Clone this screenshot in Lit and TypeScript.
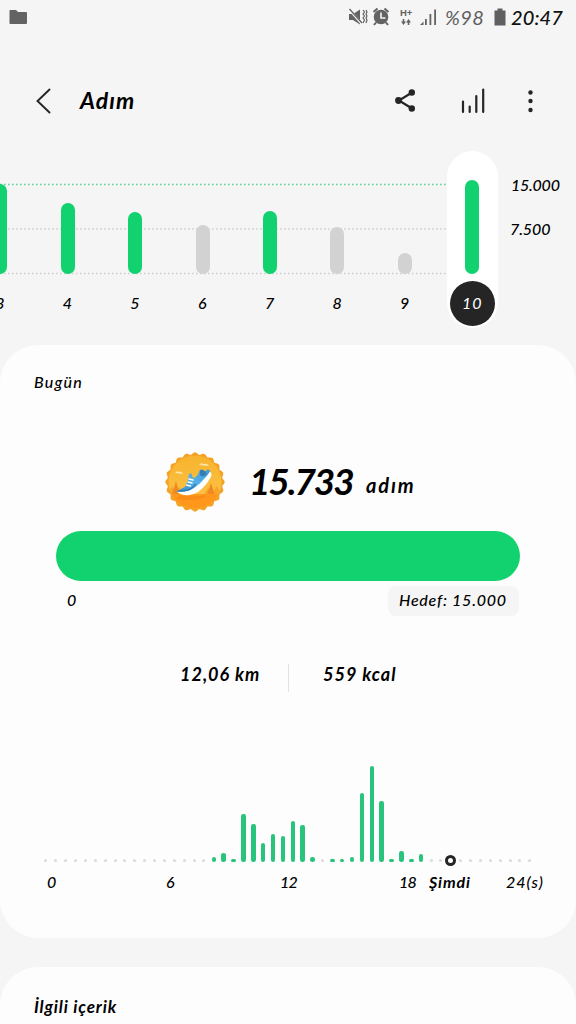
import { LitElement, html, svg, css } from "lit";
import { customElement } from "lit/decorators.js";

interface Day { label: string; height: number; met: boolean; selected?: boolean }

const DAYS: Day[] = [
  { label: "3", height: 90, met: true },
  { label: "4", height: 71, met: true },
  { label: "5", height: 62, met: true },
  { label: "6", height: 49, met: false },
  { label: "7", height: 63, met: true },
  { label: "8", height: 47, met: false },
  { label: "9", height: 21, met: false },
  { label: "10", height: 94, met: true, selected: true },
];

// Half-hour buckets; 0 draws a faint dot, -1 marks the current time.
const SLOTS: number[] = [
  0, 0, 0, 0, 0, 0, 0, 0, 0, 0, 0, 0, 0, 0, 0, 0, 0,
  5, 9, 3, 48, 38, 19, 28, 26, 41, 37, 5, 0, 3, 3, 5, 69, 96, 61, 3, 11, 3, 8, 0, 0,
  -1, 0, 0, 0, 0, 0, 0, 0, 0,
];

@customElement("week-chart")
class WeekChart extends LitElement {
  static styles = css`
    :host { display: grid; grid-template-columns: 507px 69px; height: 177px; overflow: hidden; }
    .plot, .axis { grid-row: 1; }
    .grid { grid-area: 1 / 1; width: 447px; height: 177px; display: block; }
    .plot { grid-column: 1; display: flex; margin-left: -33.5px; z-index: 1; }
    .col { width: 67.45px; flex: none; display: flex; justify-content: center; }
    .track { width: 51px; height: 177px; box-sizing: border-box; display: flex; flex-direction: column; align-items: center; justify-content: flex-end; border-radius: 26px; padding-bottom: 2.5px; }
    .track.on { background: #fff; }
    .bar { width: 14px; border-radius: 7px; background: #d2d2d2; }
    .bar.met { background: #12d16f; }
    .day { margin-top: 7px; width: 45px; height: 45px; border-radius: 50%; display: flex; align-items: center; justify-content: center; font-size: 16px; letter-spacing: .5px; color: #000; box-sizing: border-box; padding-bottom: 1px; }
    .on .day { background: #252525; color: #fff; letter-spacing: 1px; font-weight: 400; }
    .axis { grid-column: 2; padding: 24px 0 0 4px; font-size: 16px; line-height: 20px; display: flex; flex-direction: column; gap: 24px; color: #000; }
    .top { letter-spacing: -.25px; }
    .mid { letter-spacing: -.1px; margin-left: -1px; }
  `;
  render() {
    return html`
      <svg class="grid" viewBox="0 0 447 177">
        <path d="M0 33.5H447" stroke="#62cf9d" stroke-width="1.5" stroke-dasharray="1.6 2.4" />
        <path d="M0 78H447M0 122.5H447" stroke="#cfcfcf" stroke-width="1.3" stroke-dasharray="1.6 2.4" />
      </svg>
      <div class="plot">
        ${DAYS.map((d) => html`
          <div class="col">
            <div class="track ${d.selected ? "on" : ""}">
              <div class="bar ${d.met ? "met" : ""}" style="height:${d.height}px"></div>
              <div class="day">${d.label}</div>
            </div>
          </div>`)}
      </div>
      <div class="axis"><span class="top">15.000</span><span class="mid">7.500</span></div>
    `;
  }
}

@customElement("hour-chart")
class HourChart extends LitElement {
  static styles = css`
    :host { display: block; padding: 0 22px 0 41px; }
    .slots { display: flex; height: 104px; align-items: flex-end; }
    .slot { width: 9.88px; flex: none; display: flex; justify-content: center; align-items: flex-end; }
    .bar { width: 4.4px; border-radius: 2.2px; background: #29c47b; }
    .dot { width: 3px; height: 3px; border-radius: 50%; background: #dadada; }
    .now { flex: none; box-sizing: border-box; width: 11px; height: 11px; border: 3px solid #252525; border-radius: 50%; background: #fff; margin-bottom: -4px; }
    .ticks { display: grid; grid-template-columns: 119px 114px 119px 30px 77px 1fr; margin-top: 8px; padding-left: 6px; font-size: 16px; line-height: 24px; white-space: nowrap; color: #000; }
    .now-label { font-weight: 700; letter-spacing: .9px; }
    .end { letter-spacing: 1px; }
    .tight { letter-spacing: -.8px; }
  `;
  render() {
    return html`
      <div class="slots">
        ${SLOTS.map((v) => html`<div class="slot">${
          v < 0 ? html`<div class="now"></div>`
          : v === 0 ? html`<div class="dot"></div>`
          : html`<div class="bar" style="height:${v}px"></div>`}</div>`)}
      </div>
      <div class="ticks"><span>0</span><span>6</span><span class="tight">12</span><span class="tight">18</span><span class="now-label">Şimdi</span><span class="end">24(s)</span></div>
    `;
  }
}

const scallop = (): string => {
  const pts: string[] = [];
  const teeth = 20;
  for (let i = 0; i < teeth; i++) {
    const a = (i / teeth) * Math.PI * 2 - Math.PI / 2;
    const step = (Math.PI * 2) / teeth;
    const at = (r: number, t: number) => `${(30 + r * Math.cos(t)).toFixed(2)} ${(30 + r * Math.sin(t)).toFixed(2)}`;
    pts.push(`${i ? "L" : "M"}${at(27.4, a - step / 2)}L${at(29.3, a - step * 0.14)}Q${at(30, a)} ${at(29.3, a + step * 0.14)}`);
  }
  return pts.join("") + "Z";
};

const badge = svg`
  <defs>
    <clipPath id="disc"><circle cx="30" cy="30" r="26.5" /></clipPath>
    <linearGradient id="sky" x1="0" y1="0" x2="0" y2="1"><stop offset="0" stop-color="#f7b22b" /><stop offset="1" stop-color="#fcc64c" /></linearGradient>
    <linearGradient id="shoe" x1="1" y1="0" x2="0" y2="1"><stop offset="0" stop-color="#4296cf" /><stop offset=".5" stop-color="#55b2e8" /><stop offset="1" stop-color="#2d84c4" /></linearGradient>
  </defs>
  <path d=${scallop()} fill="#f5a124" />
  <g clip-path="url(#disc)">
    <rect width="60" height="60" fill="url(#sky)" />
    <path d="M3 43L7 34L10 39L14 35L20 43ZM39 43L43 36L48 40L52 34L57 43Z" fill="#f7a52a" />
    <path d="M7 43L11 29L15 43ZM42 43L46 31L50 43Z" fill="#f08a20" />
    <path d="M0 42H60V60H0Z" fill="#ff971c" />
    <path d="M15 44H42Q34 50 10 47Z" fill="#f68314" opacity=".6" />
  </g>
  <path d="M10 21q2-3 4-1q3-1 4 2zM34 13q2-3 5-1q3-1 5 2z" fill="#fee6a6" />
  <path d="M12 40Q15 37 20 35L23.500 27Q23 22 26 21L28 26Q33 25 34.500 18.500Q37 16 40 19.500Q43 16 45 19L46 22Q43 30 38 34Q32 42 24 42Z" fill="url(#shoe)" />
  <path d="M35 18.500Q37.500 16.500 40 19.500L42 22Q38 26 35 23Z" fill="#347eb4" />
  <path d="M12 39Q22 41 29 36Q35 32 39 27Q43 23 45 19.500Q48 22 45 26.500Q40 35 33 40Q27 44 20 43Q13 42 12 39Z" fill="#fff" />
  <path d="M12 39Q22 40 28 35L31 32" fill="none" stroke="#2878b4" stroke-width="1.200" />
  <path d="M24 27l4 1M23 30l4 1M21.500 33l4 1" stroke="#fff" stroke-width="1.300" stroke-linecap="round" />
`;

@customElement("app-root")
class AppRoot extends LitElement {
  static styles = css`
    :host { display: block; width: 576px; height: 1024px; overflow: hidden; background: #f5f5f5; color: #000; font-family: Lato, "Open Sans", sans-serif; font-style: italic; font-weight: 500; }
    svg { display: block; flex: none; }
    .status { height: 34px; box-sizing: border-box; display: flex; align-items: center; padding: 0 12px 0 9px; }
    .sys { margin-left: auto; }
    .pct { width: 42px; margin-left: 6px; font-size: 20px; letter-spacing: .4px; color: #606060; white-space: nowrap; font-weight: 400; }
    .cell { margin-left: 7px; }
    .clock { width: 53px; margin-left: 5px; font-size: 20px; letter-spacing: .1px; color: #111; white-space: nowrap; }
    .bar { height: 117px; box-sizing: border-box; display: flex; align-items: center; padding: 16px 32px 0 35px; }
    h1 { margin: 0 auto 2px 27px; font-size: 23px; line-height: 28px; font-weight: 700; letter-spacing: 1.1px; }
    .card { margin-top: 17px; height: 593px; box-sizing: border-box; background: #fdfdfd; border-radius: 38px; padding-top: 26px; }
    .today { padding-left: 34px; font-size: 16px; line-height: 22px; letter-spacing: 1.2px; }
    .hero { display: flex; align-items: center; height: 62px; margin-top: 58px; padding-left: 165px; }
    .count { margin-left: 24px; width: 117px; font-size: 37px; line-height: 44px; font-weight: 700; letter-spacing: -2.1px; margin-bottom: 3px; }
    .unit { font-size: 20px; font-weight: 700; padding-top: 6px; letter-spacing: 1.9px; }
    .goal { height: 50px; margin: 18px 56px 0; border-radius: 25px; background: #12d16f; }
    .range { display: flex; justify-content: space-between; align-items: center; height: 30px; margin: 5px 57px 0 67px; font-size: 16px; }
    .zero { padding-bottom: 3px; }
    .target { box-sizing: border-box; width: 131px; height: 30px; padding: 0 0 2px 11px; line-height: 28px; border-radius: 8px; background: #f5f5f5; white-space: nowrap; letter-spacing: .75px; }
    .stats { display: flex; align-items: center; height: 28px; margin-top: 48px; padding-left: 180px; font-size: 18px; font-weight: 700; white-space: nowrap; }
    .km, .kcal { height: 28px; line-height: 20px; }
    .km { width: 108px; letter-spacing: 1px; }
    .kcal { border-left: 1px solid #e2e2e2; padding-left: 34px; letter-spacing: 1px; }
    hour-chart { margin-top: 66px; }
    .more { margin-top: 29px; height: 80px; background: #fdfdfd; border-radius: 38px 38px 0 0; box-sizing: border-box; padding: 28px 34px; font-size: 17px; line-height: 24px; font-weight: 700; letter-spacing: .85px; }
  `;
  render() {
    return html`
      <header class="status">
        <svg width="18" height="16" viewBox="0 0 18 16"><path d="M1 1H7L9 3H17Q18 3 18 4V14Q18 15 17 15H1Q.5 15 .5 14V2Q.5 1 1 1Z" fill="#636363" /></svg>
        <svg class="sys" width="92" height="20" viewBox="0 0 92 20" fill="#636363">
          <path d="M2 7H6L13 2.500V17.500L6 13H2Z" />
          <path d="M1 1L15 17" stroke="#f5f5f5" stroke-width="2.500" />
          <path d="M2.500 2L15 16" stroke="#636363" stroke-width="1.300" />
          <path d="M16 3l1.500 2-1.500 2 1.500 2-1.500 2 1.500 2-1.500 3M19 3l1 2-1 2 1 2-1 2 1 2-1 3" fill="none" stroke="#636363" stroke-width="1.200" />
          <circle cx="34" cy="10" r="7.300" />
          <path d="M26.500 5l4-3.500M37.500 1.500l4 3.500M29 15.500l-2 2.500M39 15.500l2 2.500" stroke="#636363" stroke-width="2" />
          <path d="M34 5.500V11H38.500" fill="none" stroke="#f5f5f5" stroke-width="1.600" />
          <text x="53" y="9" font-family="Liberation Sans" font-style="normal" font-weight="700" font-size="9.500">H+</text>
          <path d="M56.500 12v3M61.500 18v-3" stroke="#636363" stroke-width="1.600" />
          <path d="M54 14.500h5L56.500 18zM59 15.500h5L61.500 12z" />
          <path d="M73 18L76.500 14.500V18ZM78 12h1.800V18h-1.800zM82.500 7h1.800V18h-1.800zM87.200 2.500h1.800V18h-1.800z" />
        </svg>
        <span class="pct">%98</span>
        <svg class="cell" width="12" height="18" viewBox="0 0 12 18"><path d="M3.5 0.5H8.5V2.5H11.5V17.5H.5V2.5H3.5Z" fill="#606060" /></svg>
        <span class="clock">20:47</span>
      </header>

      <nav class="bar">
        <svg width="18" height="28" viewBox="0 0 18 28"><path d="M14.5 2.5L2.5 14L14.500 25.5" fill="none" stroke="#252525" stroke-width="1.9" stroke-linecap="round" /></svg>
        <h1>Adım</h1>
        <svg width="149" height="30" viewBox="0 0 149 30" fill="#252525">
          <path d="M17 6.500L4 14.500L17 22.500" fill="none" stroke="#252525" stroke-width="2.200" />
          <circle cx="16.800" cy="6.500" r="3.200" /><circle cx="3.500" cy="14.500" r="3.400" /><circle cx="16.800" cy="22.500" r="3.200" />
          <path d="M68 15.500V26M74.700 20.500V26M81.300 10V26M88.200 3.500V26" stroke="#252525" stroke-width="2.200" stroke-linecap="round" />
          <circle cx="135.500" cy="6.500" r="2.200" /><circle cx="135.500" cy="15" r="2.200" /><circle cx="135.500" cy="24" r="2.200" />
        </svg>
      </nav>

      <week-chart></week-chart>

      <section class="card">
        <div class="today">Bugün</div>
        <div class="hero">
          <svg width="60" height="60" viewBox="0 0 60 60">${badge}</svg>
          <span class="count">15.733</span><span class="unit">adım</span>
        </div>
        <div class="goal"></div>
        <div class="range"><span class="zero">0</span><span class="target">Hedef: 15.000</span></div>
        <div class="stats"><span class="km">12,06 km</span><span class="kcal">559 kcal</span></div>
        <hour-chart></hour-chart>
      </section>

      <section class="more">İlgili içerik</section>
    `;
  }
}
